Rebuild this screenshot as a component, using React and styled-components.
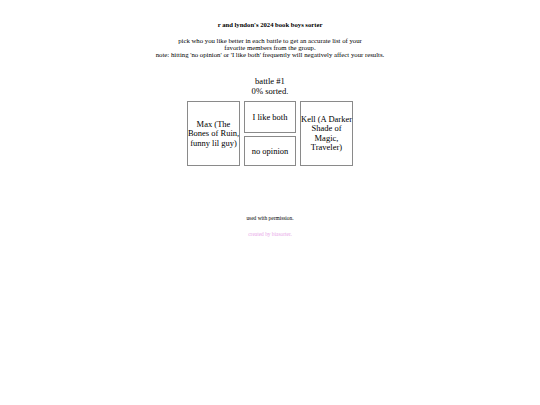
import React from "react";
import styled, { createGlobalStyle } from "styled-components";

const Global = createGlobalStyle`
  html, body { margin: 0; padding: 0; background: #fff; }
  body { font-family: "Liberation Serif", "Times New Roman", serif; color: #000; }
`;

const Page = styled.div`
  width: 540px;
  height: 405px;
  display: flex;
  flex-direction: column;
  align-items: center;
  text-align: center;
`;

const Title = styled.div`
  margin-top: 21px;
  font-weight: bold;
  font-size: 6.65px;
  line-height: 8px;
`;

const Intro = styled.div`
  margin-top: 9px;
  font-size: 6.75px;
  line-height: 6.8px;
`;

const Battle = styled.div`
  margin-top: 19px;
  font-size: 8.6px;
  line-height: 9.5px;
`;

const Arena = styled.div`
  margin-top: 5px;
  display: flex;
  gap: 4px;
`;

const Choice = styled.div`
  box-sizing: border-box;
  width: ${(p) => p.$w}px;
  height: ${(p) => p.$h}px;
  border: 1px solid #8a8a8a;
  display: flex;
  align-items: center;
  justify-content: center;
  font-size: 8.5px;
  line-height: 9.4px;
  white-space: nowrap;
  cursor: pointer;
`;

const Middle = styled.div`
  display: flex;
  flex-direction: column;
  gap: 3px;
`;

const Note = styled.div`
  margin-top: 49px;
  font-size: 5.4px;
  line-height: 7px;
`;

const Credit = styled(Note)`
  margin-top: 9px;
  color: #e8a6e8;
`;

export default function App() {
  return (
    <Page>
      <Global />
      <Title>r and lyndon's 2024 book boys sorter</Title>
      <Intro>
        pick who you like better in each battle to get an accurate list of your
        <br />
        favorite members from the group.
        <br />
        note: hitting 'no opinion' or 'I like both' frequently will negatively affect your results.
      </Intro>
      <Battle>
        battle #1
        <br />
        0% sorted.
      </Battle>
      <Arena>
        <Choice $w={53} $h={65}>
          Max (The
          <br />
          Bones of Ruin,
          <br />
          funny lil guy)
        </Choice>
        <Middle>
          <Choice $w={52} $h={32}>I like both</Choice>
          <Choice $w={52} $h={30}>no opinion</Choice>
        </Middle>
        <Choice $w={53} $h={65}>
          Kell (A Darker
          <br />
          Shade of
          <br />
          Magic,
          <br />
          Traveler)
        </Choice>
      </Arena>
      <Note>used with permission.</Note>
      <Credit>created by biasorter.</Credit>
    </Page>
  );
}
